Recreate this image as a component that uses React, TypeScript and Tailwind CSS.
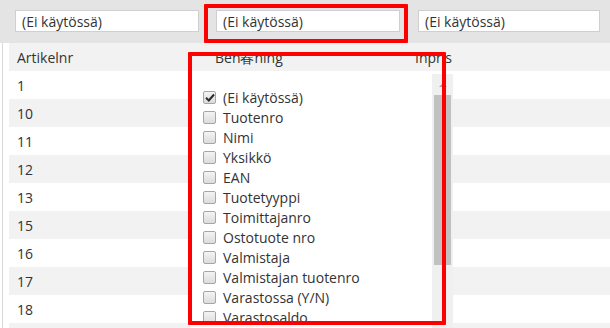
import { type ReactNode } from 'react'

const rows = ['1', '10', '11', '12', '13', '15', '16', '17', '18', '']

const options = [
  '(Ei käytössä)',
  'Tuotenro',
  'Nimi',
  'Yksikkö',
  'EAN',
  'Tuotetyyppi',
  'Toimittajanro',
  'Ostotuote nro',
  'Valmistaja',
  'Valmistajan tuotenro',
  'Varastossa (Y/N)',
  'Varastosaldo',
]

function FilterInput({ className }: { className: string }) {
  return (
    <div className={`h-[22px] bg-white border border-[#cfcfcf] flex items-center px-[6px] text-[14px] text-[#333] ${className}`}>
      (Ei käytössä)
    </div>
  )
}

function Checkbox({ checked }: { checked?: boolean }) {
  return (
    <span className="w-[13px] h-[13px] shrink-0 rounded-[2px] border border-[#a6a6a6] bg-gradient-to-b from-[#f4f4f4] to-[#dcdcdc] flex items-center justify-center">
      {checked && (
        <svg width="10" height="9" viewBox="0 0 10 9">
          <path d="M1 4.8 L3.8 7.5 L9 1.5" fill="none" stroke="#2b2b2b" strokeWidth="2" />
        </svg>
      )}
    </span>
  )
}

function Cell({ children, className = '' }: { children?: ReactNode; className?: string }) {
  return <div className={`flex items-center ${className}`}>{children}</div>
}

export default function App() {
  return (
    <div className="relative w-[610px] h-[328px] overflow-hidden bg-white font-['Open_Sans',sans-serif] text-[#333]">
      {/* filter bar */}
      <div className="h-[43px] bg-[#e4e4e4] flex pt-[10px] pl-[15px]">
        <FilterInput className="w-[184px]" />
        <FilterInput className="w-[184px] ml-[17px]" />
        <FilterInput className="w-[182px] ml-[18px]" />
      </div>

      {/* table */}
      <div className="ml-[2px] border-l border-[#d8d8d8] pl-[6px]">
        <div className="h-[28px] bg-[#f2f2f2] flex text-[14px]">
          <Cell className="w-[199px] pl-[8px]">Artikelnr</Cell>
          <Cell className="w-[200px] pl-[7px]">Ben春ning</Cell>
          <Cell className="pl-[7px]">Inpris</Cell>
        </div>
        {rows.map((r, i) => (
          <div key={i} className={`h-[28px] flex text-[14px] ${i % 2 === 1 ? 'bg-[#f2f2f2]' : 'bg-white'}`}>
            <Cell className="w-[199px] pl-[8px]">{r}</Cell>
          </div>
        ))}
      </div>

      {/* dropdown list */}
      <div className="absolute left-[190px] top-[72px] w-[263px] h-[260px] bg-white">
        <div className="pt-[15px] pl-[13px] flex flex-col">
          {options.map((o, i) => (
            <div key={o} className="h-[20px] flex items-center gap-[7px] text-[14px] text-[#333]">
              <Checkbox checked={i === 0} />
              <span>{o}</span>
            </div>
          ))}
        </div>
        <div className="absolute left-[242px] top-[2px] w-[21px] h-[258px] bg-[#f0f0f0]">
          <div className="flex justify-center pt-[9px]">
            <div className="w-0 h-0 border-l-[4px] border-r-[4px] border-b-[4px] border-l-transparent border-r-transparent border-b-[#a3a3a3]" />
          </div>
          <div className="absolute left-[2px] top-[21px] w-[17px] h-[170px] bg-[#c1c1c1]" />
        </div>
      </div>

      {/* annotation frames */}
      <div className="absolute left-[204px] top-[4px] w-[204px] h-[39px] border-[4px] border-[#ff0000] rounded-[1px]" />
      <div className="absolute left-[188px] top-[52px] w-[258px] h-[273px] border-[4px] border-[#ff0000] rounded-[1px]" />
    </div>
  )
}
